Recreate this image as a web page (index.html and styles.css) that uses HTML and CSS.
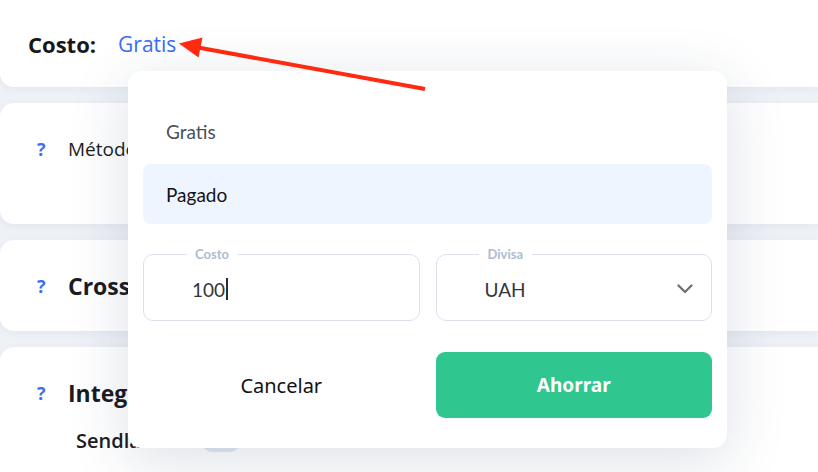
FILE: index.html
```html
<!DOCTYPE html>
<html lang="es">
<head>
<meta charset="utf-8">
<title>Costo</title>
<link rel="stylesheet" href="styles.css">
</head>
<body>
<div class="page">
  <section class="card card-top">
    <span class="label">Costo:</span>
    <span class="link">Gratis</span>
  </section>
  <section class="card card-method">
    <div class="row"><span class="q">?</span><span class="method">Método de pago</span></div>
  </section>
  <section class="card card-cross">
    <div class="row"><span class="q">?</span><span class="title">Crossell</span></div>
  </section>
  <section class="card card-integ">
    <div class="row"><span class="q">?</span><span class="title">Integraciones</span></div>
    <div class="sub"><span class="sub-name">Sendlane</span><span class="toggle"></span></div>
  </section>
</div>

<div class="popup">
  <div class="options">
    <div class="opt">Gratis</div>
    <div class="opt active">Pagado</div>
  </div>
  <div class="fields">
    <fieldset class="field">
      <legend>Costo</legend>
      <div class="value">100<span class="caret"></span></div>
    </fieldset>
    <fieldset class="field">
      <legend>Divisa</legend>
      <div class="value select">UAH
        <svg class="chev" width="16" height="10" viewBox="0 0 16 10"><path d="M1.5 1.5 L8 8 L14.5 1.5" fill="none" stroke="#6b6e75" stroke-width="2.2" stroke-linecap="round" stroke-linejoin="round"/></svg>
      </div>
    </fieldset>
  </div>
  <div class="actions">
    <button class="btn cancel">Cancelar</button>
    <button class="btn save">Ahorrar</button>
  </div>
</div>

<svg class="arrow" width="818" height="472" viewBox="0 0 818 472">
  <line x1="425" y1="89" x2="198" y2="47.5" stroke="#ff2a10" stroke-width="4"/>
  <polygon points="179,43.5 202.5,37.5 198.5,57.5" fill="#ff2a10"/>
</svg>
</body>
</html>
```

FILE: styles.css
```css
* { box-sizing: border-box; }

body {
  margin: 0;
  width: 818px;
  height: 472px;
  overflow: hidden;
  position: relative;
  background: #eef1f6;
  font-family: "Open Sans", "Noto Sans", sans-serif;
  color: #1b1b1f;
}

.page {
  display: flex;
  flex-direction: column;
  gap: 16px;
  width: 100%;
}

.card {
  background: #fff;
  border-radius: 14px 0 0 14px;
  box-shadow: 0 2px 8px rgba(40, 60, 100, 0.05);
  overflow: hidden;
}

.card-top {
  height: 87px;
  border-radius: 0 0 0 14px;
  display: flex;
  align-items: center;
  gap: 22px;
  padding-left: 28px;
}

.label {
  font-size: 22px;
  font-weight: 700;
  color: #17171b;
}

.link {
  font-size: 21px;
  color: #3a6ef5;
}

.row {
  display: flex;
  align-items: center;
  height: 28px;
  padding-left: 37px;
}

.q {
  width: 31px;
  font-size: 18px;
  font-weight: 700;
  color: #3b6ff3;
}

.card-method {
  height: 121px;
  padding-top: 32px;
}

.method {
  font-size: 19px;
  color: #1d1d22;
}

.title {
  font-size: 23px;
  font-weight: 700;
  color: #1b1b20;
}

.card-cross {
  height: 91px;
  display: flex;
  align-items: center;
}

.card-integ {
  height: 125px;
  border-radius: 14px 0 0 0;
  padding-top: 32px;
}

.sub {
  display: flex;
  align-items: center;
  gap: 36px;
  margin-top: 21px;
  padding-left: 76px;
  height: 24px;
}

.sub-name {
  font-size: 20px;
  font-weight: 600;
  color: #1d1d22;
}

.toggle {
  width: 40px;
  height: 24px;
  border-radius: 12px;
  background: #e4e9f3;
}

/* popup */
.popup {
  position: absolute;
  left: 128px;
  top: 71px;
  width: 599px;
  height: 377px;
  padding: 30px 15px 30px;
  background: #fff;
  border-radius: 14px;
  box-shadow: 0 12px 60px rgba(30, 50, 90, 0.15);
}

.options {
  display: flex;
  flex-direction: column;
  gap: 3px;
}

.opt {
  height: 60px;
  display: flex;
  align-items: center;
  padding-left: 23px;
  border-radius: 8px;
  font-family: Lato, "Open Sans", sans-serif;
  font-size: 19px;
  color: #4d5058;
}

.opt.active {
  background: #eff5fe;
  color: #121216;
}

.fields {
  margin-top: 23px;
  display: grid;
  grid-template-columns: 1fr 1fr;
  gap: 16px;
}

.field {
  margin: 0;
  min-width: 0;
  border: 1px solid #dedfee;
  border-radius: 10px;
  padding: 0 18px 0 42px;
}

.field legend {
  padding: 0 9px;
  font-family: Lato, "Open Sans", sans-serif;
  font-size: 13px;
  line-height: 14px;
  font-weight: 700;
  color: #aebcd2;
}

.value {
  height: 56px;
  margin-bottom: 3px;
  display: flex;
  align-items: center;
  padding-left: 6px;
  font-family: Lato, "Open Sans", sans-serif;
  font-size: 19px;
  color: #34363c;
}

.value.select {
  padding-left: 6px;
  justify-content: space-between;
}

.caret {
  display: inline-block;
  width: 2px;
  height: 22px;
  margin-left: 1px;
  background: #2b2d33;
}

.actions {
  margin-top: 31px;
  display: grid;
  grid-template-columns: 1fr 1fr;
  gap: 16px;
}

.btn {
  height: 66px;
  border: none;
  border-radius: 9px;
  font-family: "Noto Sans", "Open Sans", sans-serif;
  font-size: 20px;
  cursor: pointer;
}

.cancel {
  background: transparent;
  color: #111114;
}

.save {
  background: #2fc68f;
  color: #fff;
  font-weight: 700;
  font-size: 19px;
}

.arrow {
  position: absolute;
  left: 0;
  top: 0;
  pointer-events: none;
}
```
